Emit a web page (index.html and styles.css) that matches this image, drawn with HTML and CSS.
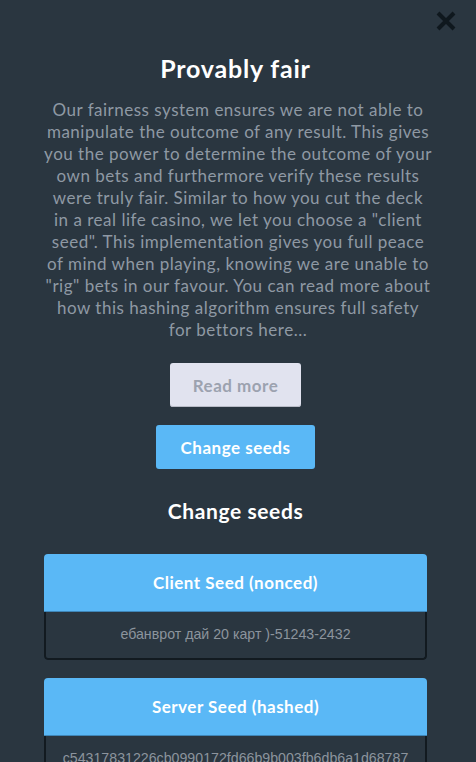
FILE: index.html
```html
<!DOCTYPE html>
<html>
<head>
<meta charset="utf-8">
<link rel="stylesheet" href="styles.css">
</head>
<body>
<div class="modal">
  <button class="close" aria-label="Close">
    <svg width="22" height="22" viewBox="0 0 22 22"><path d="M3 3L19 19M19 3L3 19" stroke="#0f181e" stroke-width="4" stroke-linecap="butt"/></svg>
  </button>
  <h1 class="title">Provably fair</h1>
  <p class="intro">Our fairness system ensures we are not able to manipulate the outcome of any result. This gives you the power to determine the outcome of your own bets and furthermore verify these results were truly fair. Similar to how you cut the deck in a real life casino, we let you choose a "client seed". This implementation gives you full peace of mind when playing, knowing we are unable to "rig" bets in our favour. You can read more about how this hashing algorithm ensures full safety for bettors here...</p>
  <div class="actions">
    <button class="btn btn-light">Read more</button>
    <button class="btn btn-blue">Change seeds</button>
  </div>
  <h2 class="subtitle">Change seeds</h2>
  <div class="card">
    <div class="card-head">Client Seed (nonced)</div>
    <div class="card-body">ебанврот дай 20 карт )-51243-2432</div>
  </div>
  <div class="card">
    <div class="card-head">Server Seed (hashed)</div>
    <div class="card-body">c54317831226cb0990172fd66b9b003fb6db6a1d68787</div>
  </div>
</div>
</body>
</html>
```
FILE: styles.css
```css
html, body {
  margin: 0;
  padding: 0;
  background: #2a3640;
  height: 100%;
  overflow: hidden;
}
.modal {
  position: relative;
  padding: 52px 49px 0 44px;
  font-family: Lato, "Open Sans", sans-serif;
  text-align: center;
}
.close {
  position: absolute;
  top: 10px;
  right: 19px;
  background: none;
  border: none;
  padding: 0;
  width: 22px;
  height: 22px;
}
.close svg { display: block; }
.title {
  margin: 0;
  font-size: 25px;
  font-weight: 700;
  letter-spacing: 0.8px;
  color: #ffffff;
  line-height: 32px;
}
.intro {
  margin: 15px -5px 0 0;
  font-size: 17px;
  letter-spacing: 0.5px;
  line-height: 22px;
  color: #8f99a4;
}
.actions {
  display: flex;
  flex-direction: column;
  align-items: center;
  gap: 18px;
  margin-top: 22px;
}
.btn {
  font-family: inherit;
  font-size: 17px;
  font-weight: 700;
  letter-spacing: 0.5px;
  height: 44px;
  border: none;
  border-radius: 3px;
  padding: 0;
}
.btn-light {
  background: #e1e3ef;
  color: #9ca2af;
  width: 131px;
  box-shadow: inset 0 -1px 0 #b8bbc6;
}
.btn-blue {
  background: #5ab8f6;
  color: #ffffff;
  width: 159px;
}
.subtitle {
  margin: 28px 0 0 0;
  font-size: 21px;
  line-height: 28px;
  letter-spacing: 0.6px;
  font-weight: 700;
  color: #ffffff;
}
.card {
  margin-top: 29px;
  border-radius: 4px;
  overflow: hidden;
}
.card + .card { margin-top: 18px; }
.card-head {
  background: #5ab8f6;
  color: #ffffff;
  font-weight: 700;
  font-size: 17px;
  letter-spacing: 0.5px;
  height: 57px;
  line-height: 57px;
  border-bottom: 1px solid #3f86b8;
}
.card-body {
  border: 2px solid #121a20;
  border-top: none;
  border-radius: 0 0 4px 4px;
  height: 46px;
  line-height: 44px;
  font-family: "Liberation Sans", Arial, sans-serif;
  font-size: 14.2px;
  color: #8c949d;
}
```
